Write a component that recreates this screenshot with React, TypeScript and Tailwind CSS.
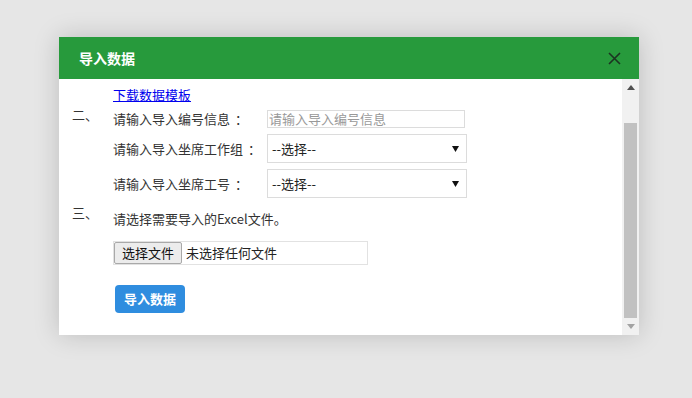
import React from 'react';

const font = { fontFamily: '"Noto Sans CJK SC", "Noto Sans", sans-serif' };

function Arrow({ dir }: { dir: 'up' | 'down' }) {
  return (
    <div className="h-[17px] flex items-center justify-center">
      <svg width="8" height="5" viewBox="0 0 8 5">
        {dir === 'up' ? <polygon points="4,0 8,5 0,5" fill="#505050" /> : <polygon points="0,0 8,0 4,5" fill="#a3a3a3" />}
      </svg>
    </div>
  );
}

function Label({ text }: { text: string }) {
  return (
    <span className="w-[154px]">
      {text}
      <span className="ml-[5px]">：</span>
    </span>
  );
}

function Select() {
  return (
    <div className="w-[200px] h-[29px] border border-[#dcdcdc] bg-white flex items-center justify-between pl-[4px] pr-[7px] text-[13px] text-[#222]">
      <span>--选择--</span>
      <svg width="7" height="6" viewBox="0 0 7 6">
        <polygon points="0,0 7,0 3.5,6" fill="#111" />
      </svg>
    </div>
  );
}

export default function App() {
  return (
    <div className="w-[692px] h-[398px] bg-[#e6e6e6] pt-[37px] pl-[59px] text-[13px]" style={font}>
      <div className="w-[580px] h-[298px] bg-white shadow-[0_0_24px_rgba(0,0,0,0.18)] flex flex-col">
        <div className="h-[42px] bg-[#279a3c] flex items-center justify-between pl-[20px] pr-[18px]">
          <span className="text-white text-[14px] font-bold">导入数据</span>
          <svg width="13" height="13" viewBox="0 0 13 13">
            <path d="M1 1 L12 12 M12 1 L1 12" stroke="#1c3322" strokeWidth="1.6" />
          </svg>
        </div>
        <div className="flex flex-1 min-h-0">
          <div className="flex-1 text-[#333]">
            <div className="pl-[54px] pt-[8px] h-[24px] leading-[16px]">
              <span className="text-[#0000ee] underline">下载数据模板</span>
            </div>
            <div className="flex mt-[7px] h-[18px]">
              <span className="w-[54px] pl-[13px] leading-[14px] -mt-[2px]">二、</span>
              <span className="w-[154px] leading-[18px]">
                请输入导入编号信息<span className="ml-[5px]">：</span>
              </span>
              <div className="w-[198px] h-[18px] border border-[#dcdcdc] px-[1px] leading-[16px] text-[#999] text-[13px]">请输入导入编号信息</div>
            </div>
            <div className="flex items-center mt-[6px] h-[29px]">
              <span className="w-[54px]" />
              <Label text="请输入导入坐席工作组" />
              <Select />
            </div>
            <div className="flex items-center mt-[6px] h-[29px]">
              <span className="w-[54px]" />
              <Label text="请输入导入坐席工号" />
              <Select />
            </div>
            <div className="flex mt-[13px] h-[16px] leading-[16px]">
              <span className="w-[54px] pl-[13px] -mt-[6px]">三、</span>
              <span>请选择需要导入的Excel文件。</span>
            </div>
            <div className="ml-[54px] mt-[14px] w-[255px] h-[24px] border border-[#e2e2e2] flex items-center">
              <div className="h-[22px] px-[7px] bg-[#ececec] border border-[#a9a9a9] rounded-[2px] flex items-center text-[#111]">选择文件</div>
              <span className="ml-[4px] text-[#222]">未选择任何文件</span>
            </div>
            <div className="ml-[56px] mt-[20px] w-[70px] h-[28px] rounded-[4px] bg-[#2f8ddf] text-white font-bold flex items-center justify-center">导入数据</div>
          </div>
          <div className="w-[17px] bg-[#f1f1f1] flex flex-col">
            <Arrow dir="up" />
            <div className="flex-1 flex flex-col px-[2px]">
              <div className="h-[27px]" />
              <div className="flex-1 bg-[#c1c1c1]" />
            </div>
            <Arrow dir="down" />
          </div>
        </div>
      </div>
    </div>
  );
}
